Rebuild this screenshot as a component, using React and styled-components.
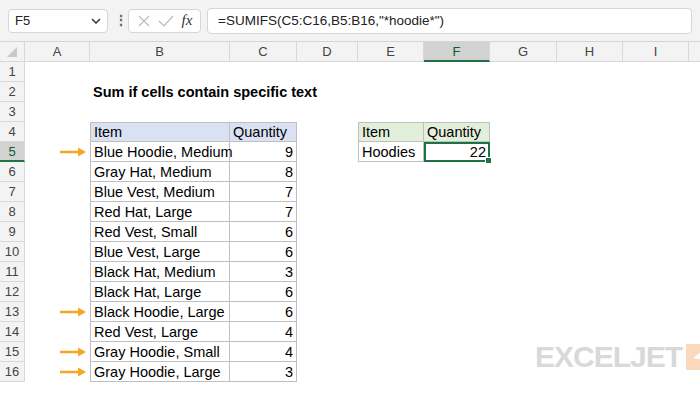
import React from "react";
import styled, { createGlobalStyle } from "styled-components";

const G = createGlobalStyle`
  body { margin:0; background:#fff; font-family: Calibri, "Liberation Sans", Arial, sans-serif; }
`;
const Wrap = styled.div`width:700px;height:400px;overflow:hidden;background:#fff;position:relative;`;
const Bar = styled.div`height:42px;background:#f3f3f3;display:flex;align-items:center;gap:6px;padding:0 8px;box-sizing:border-box;border-bottom:1px solid #d4d4d4;`;
const NameBox = styled.div`width:100px;height:24px;background:#fff;border:1px solid #d6d6d6;border-radius:4px;display:flex;align-items:center;justify-content:space-between;padding:0 6px;box-sizing:border-box;font-size:13px;color:#222;font-family:"Liberation Sans",Arial,sans-serif;`;
const Dots = styled.div`color:#666;font-size:14px;font-weight:bold;width:8px;text-align:center;`;
const FxBox = styled.div`width:73px;height:24px;background:#fff;border:1px solid #d6d6d6;border-radius:4px;display:flex;align-items:center;justify-content:space-around;padding:0 4px;box-sizing:border-box;color:#bbb;`;
const Formula = styled.div`flex:1;height:24px;background:#fff;border:1px solid #d6d6d6;border-radius:4px;display:flex;align-items:center;padding:0 10px;font-size:13.5px;color:#222;font-family:"Liberation Sans",Arial,sans-serif;`;
const Grid = styled.div`display:grid;grid-template-columns:25px 65px 140px 67px 61px 66px 66px 67px 66px 66px 40px;grid-auto-rows:20px;`;
const Head = styled.div`background:${p=>p.sel?"#d2d2d2":"#f3f3f3"};color:${p=>p.sel?"#0f5c2e":"#444"};border-right:1px solid #d9d9d9;border-bottom:${p=>p.sel?"2px solid #1f7244":"1px solid #d9d9d9"};display:flex;align-items:center;justify-content:center;font-size:13px;box-sizing:border-box;font-family:"Liberation Sans",Arial,sans-serif;`;
const Cell = styled.div`position:relative;box-sizing:border-box;font-size:14.5px;display:flex;align-items:center;padding:0 3px;white-space:nowrap;color:#000;font-family:"Liberation Sans",Arial,sans-serif;
  justify-content:${p=>p.r?"flex-end":"flex-start"};
  background:${p=>p.bg||"transparent"};
  font-weight:${p=>p.b?"bold":"normal"};
  ${p=>p.t?"border-right:1px solid #bfbfbf;border-bottom:1px solid #bfbfbf;":""}
  ${p=>p.tl?"border-left:1px solid #bfbfbf;":""}
  ${p=>p.tt?"border-top:1px solid #bfbfbf;":""}
  ${p=>p.act?"outline:2px solid #1f7244;outline-offset:-2px;":""}
`;
const Handle = styled.div`position:absolute;right:-3px;bottom:-3px;width:5px;height:5px;background:#1f7244;border:1px solid #fff;`;
const Logo = styled.div`position:absolute;left:535px;top:340px;display:flex;align-items:center;gap:4px;font-family:"Liberation Sans",Arial,sans-serif;font-weight:900;font-size:30px;color:#d9d9d9;letter-spacing:-1px;`;

const Arrow = () => (
  <svg width="28" height="10" viewBox="0 0 28 10"><path d="M1 5H22" stroke="#f5a623" strokeWidth="2.5"/><path d="M19 0.5L27 5L19 9.5Z" fill="#f5a623"/></svg>
);

const data=[["Blue Hoodie, Medium",9,1],["Gray Hat, Medium",8],["Blue Vest, Medium",7],["Red Hat, Large",7],["Red Vest, Small",6],["Blue Vest, Large",6],["Black Hat, Medium",3],["Black Hat, Large",6],["Black Hoodie, Large",6,1],["Red Vest, Large",4],["Gray Hoodie, Small",4,1],["Gray Hoodie, Large",3,1]];
const cols=["","A","B","C","D","E","F","G","H","I",""];

export default function App(){
  const rows=[];
  for(let r=1;r<=16;r++){
    const c=Array(11).fill(null).map((_,i)=>i===0?<Head sel={r===5}>{r}</Head>:<Cell/>);
    if(r===2) c[2]=<Cell b>Sum if cells contain specific text</Cell>;
    if(r===4){
      c[2]=<Cell t tl tt bg="#d9e1f2">Item</Cell>;
      c[3]=<Cell t tt bg="#d9e1f2">Quantity</Cell>;
      c[5]=<Cell t tl tt bg="#e2efda">Item</Cell>;
      c[6]=<Cell t tt bg="#e2efda">Quantity</Cell>;
    }
    if(r>=5){
      const d=data[r-5];
      if(d[2]) c[1]=<Cell r><Arrow/></Cell>;
      c[2]=<Cell t tl>{d[0]}</Cell>;
      c[3]=<Cell t r>{d[1]}</Cell>;
    }
    if(r===5){
      c[5]=<Cell t tl>Hoodies</Cell>;
      c[6]=<Cell t r act>22<Handle/></Cell>;
    }
    rows.push(...c.map((x,i)=>React.cloneElement(x,{key:r+"-"+i})));
  }
  return (<Wrap><G/>
    <Bar>
      <NameBox><span>F5</span><svg width="10" height="6" viewBox="0 0 10 6"><path d="M1 1L5 5L9 1" stroke="#333" strokeWidth="1.5" fill="none"/></svg></NameBox>
      <Dots>⋮</Dots>
      <FxBox>
        <svg width="14" height="14" viewBox="0 0 14 14"><path d="M2 2L12 12M12 2L2 12" stroke="#bbb" strokeWidth="1.2"/></svg>
        <svg width="16" height="14" viewBox="0 0 16 14"><path d="M1 7L6 12L15 2" stroke="#bbb" strokeWidth="1.2" fill="none"/></svg>
        <span style={{fontFamily:"'Liberation Serif',serif",fontStyle:"italic",color:"#333",fontSize:15}}>fx</span>
      </FxBox>
      <Formula>=SUMIFS(C5:C16,B5:B16,"*hoodie*")</Formula>
    </Bar>
    <Grid>
      {cols.map((h,i)=><Head key={"h"+i} sel={h==="F"}>{i===0?<svg width="12" height="12"><path d="M11 1V11H1Z" fill="#c8c8c8"/></svg>:h}</Head>)}
      {rows}
    </Grid>
    <Logo>EXCELJET<svg width="26" height="26" viewBox="0 0 22 22"><rect width="22" height="22" fill="#fbd9bd"/><path d="M16 4L6 12L14 13Z" fill="#fff"/></svg></Logo>
  </Wrap>);
}
